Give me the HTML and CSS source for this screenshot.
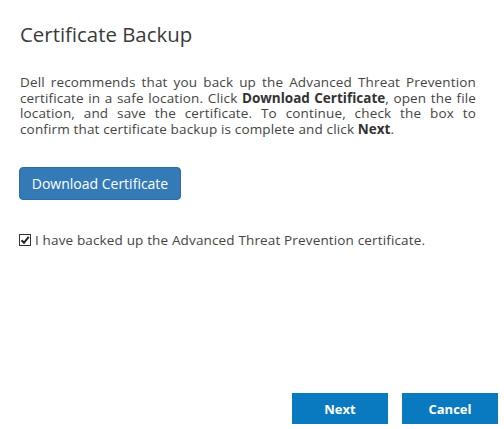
FILE: index.html
```html
<!DOCTYPE html>
<html>
<head>
<meta charset="utf-8">
<link rel="stylesheet" href="styles.css">
</head>
<body>
<div class="dialog">
  <h1 class="title">Certificate Backup</h1>
  <p class="desc">Dell recommends that you back up the Advanced Threat Prevention certificate in a safe location. Click <b>Download Certificate</b>, open the file location, and save the certificate. To continue, check the box to confirm that certificate backup is complete and click <b>Next</b>.</p>
  <div class="download-row">
    <button class="btn-download" type="button">Download Certificate</button>
  </div>
  <label class="check-row">
    <span class="check" role="checkbox" aria-checked="true">
      <svg width="10" height="10" viewBox="0 0 10 10"><path d="M1.5 5.2 L4 7.8 L8.7 1.8" fill="none" stroke="#222" stroke-width="2"/></svg>
    </span>
    <span>I have backed up the Advanced Threat Prevention certificate.</span>
  </label>
  <div class="spacer"></div>
  <div class="footer">
    <button class="btn-footer" type="button">Next</button>
    <button class="btn-footer" type="button">Cancel</button>
  </div>
</div>
</body>
</html>
```
FILE: styles.css
```css
html, body {
  margin: 0;
  padding: 0;
  background: #ffffff;
}
body {
  font-family: "Open Sans", "Liberation Sans", sans-serif;
  color: #444444;
}
.dialog {
  width: 504px;
  height: 429px;
  box-sizing: border-box;
  padding: 0 6px 5px 20px;
  display: flex;
  flex-direction: column;
}
.title {
  margin: 23px 0 0 0;
  font-size: 20.4px;
  font-weight: 400;
  line-height: 22px;
  color: #3a3a3a;
}
.desc {
  margin: 30px 22px 0 0;
  font-size: 13.5px;
  letter-spacing: 0.15px;
  line-height: 15.7px;
  text-align: justify;
  color: #444444;
}
.desc b {
  font-weight: 700;
  letter-spacing: 0;
  color: #333333;
}
.download-row {
  margin-top: 29px;
  display: flex;
}
.btn-download {
  margin-left: -1px;
  width: 162px;
  height: 33px;
  background: #337ab7;
  border: 1px solid #2e6da4;
  border-radius: 4px;
  color: #ffffff;
  font-family: inherit;
  font-size: 14px;
  padding: 0;
}
.check-row {
  margin-top: 31px;
  display: flex;
  align-items: center;
  gap: 4px;
  font-size: 13.5px;
  letter-spacing: 0.15px;
  color: #444444;
}
.check {
  margin-left: -1px;
  width: 10px;
  height: 10px;
  border: 1px solid #333333;
  background: #ffffff;
  display: flex;
  align-items: center;
  justify-content: center;
}
.check svg {
  display: block;
}
.spacer {
  flex: 1;
}
.footer {
  display: flex;
  justify-content: flex-end;
  gap: 14px;
}
.btn-footer {
  width: 96px;
  height: 31px;
  background: #0a7ac0;
  border: none;
  color: #ffffff;
  font-family: inherit;
  font-weight: 700;
  font-size: 13px;
  padding: 0;
}
```
